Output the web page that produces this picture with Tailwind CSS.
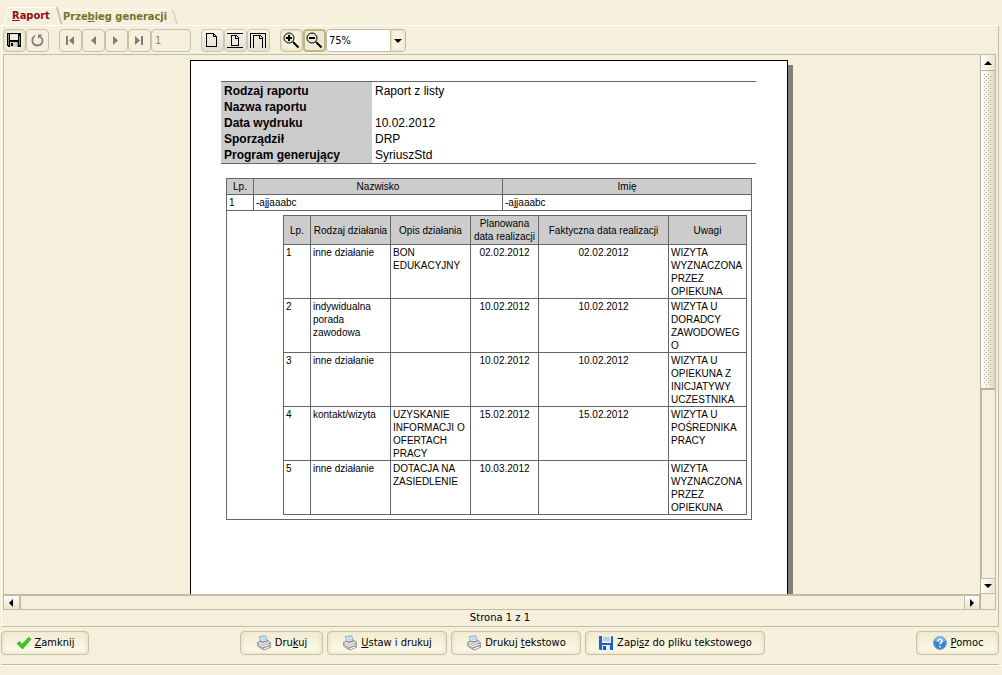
<!DOCTYPE html>
<html lang="pl">
<head>
<meta charset="utf-8">
<title>Raport</title>
<script src="https://cdn.jsdelivr.net/npm/@tailwindcss/browser@4"></script>
</head>
<body class="flex h-screen flex-col overflow-hidden bg-[#f5efdc] font-['DejaVu_Sans_Condensed','DejaVu_Sans',sans-serif] text-[11px] leading-4 text-black">

<!-- shared icons -->
<svg class="hidden">
  <symbol id="printer" viewBox="0 0 16 16">
    <path d="M4.500 7 3.500 1.500 9.500.8 11.500 6z" fill="#dcecf8" stroke="#7d9ab5" stroke-width=".8"/>
    <path d="M5.300 3l4-.5M5.700 4.800l4-.5" stroke="#9dc3e2" stroke-width=".7"/>
    <path d="M1.500 7.500 5 5.800l1 1.400 5-.9.500-1.300 3 2.500v4L7 14.500 1.500 11z" fill="#d9d9da" stroke="#77777b" stroke-width=".8"/>
    <path d="M1.500 7.700 7 10.200l7.500-2.700v4L7 14.500 1.500 11z" fill="#b2b2b6"/>
    <path d="M3 9.500l4 2 7-2.400" stroke="#fafafa" fill="none"/>
    <path d="M6.500 13.200 13 10.800l1.800 1.400-6.500 2.800z" fill="#f4f4f4" stroke="#77777b" stroke-width=".7"/>
    <path d="M12.500 8.600h1.400" stroke="#35b024"/>
  </symbol>
</svg>

<nav class="relative flex h-[25px] shrink-0 items-end pl-3 text-[11px] font-bold">
  <svg class="absolute top-0 left-0" width="182" height="26" viewBox="0 0 182 26" fill="none">
    <path d="M4.500 25C6 19 6 7.500 11 7.500H56" stroke="#fff"/>
    <path d="M56 7.500c3 1 3.500 14 6 17" stroke="#bfbda6" stroke-width="1.500"/>
    <path d="M60 9.500h111" stroke="#fff"/>
    <path d="M171 9.500c4 1 4 12 6.500 15" stroke="#c9c6b0"/>
  </svg>
  <button class="relative h-[18px] w-[51px] text-left whitespace-nowrap text-[#8f0d14]"><u>R</u>aport</button>
  <button class="relative h-4 whitespace-nowrap text-[#75732f]">Prze<u>b</u>ieg generacji</button>
</nav>

<main class="mr-[3px] ml-px flex min-h-0 flex-1 flex-col border border-t-white border-r-[#c0bda6] border-b-[#c0bda6] border-l-white pt-[3px]">
  <div class="flex h-[25px] shrink-0 items-start gap-[10px] pl-px">
    <div class="flex">
      <button aria-label="Zapisz" class="grid size-[23px] place-items-center rounded-[4px] border border-[#c6c2aa] bg-[#f8f3df] shadow-[inset_0_0_4px_#d9d09c]">
        <svg width="15" height="15" viewBox="0 0 15 15" shape-rendering="crispEdges"><path d="M0 0h14v14H1l-1-1z" fill="#000"/><path d="M1 1h1v11H1zM12 3h1v9h-1z" fill="#7f8790"/><path d="M3 1h8v6H3z" fill="#f2eedd"/><path d="M3 9h8v5H3z" fill="#cfd0d4"/><path d="M4 10h2v3H4z" fill="#000"/><path d="M10 9h1v5h-1z" fill="#85878b"/></svg>
      </button>
      <button aria-label="Odśwież" class="grid size-[23px] place-items-center rounded-[4px] border border-[#c6c2aa]">
        <svg width="13" height="13" viewBox="0 0 13 13" fill="none"><path d="M4 1.800C.8 3.500.5 8 3 10.200s6.500 1.500 8-1.200C12.200 6.500 11.200 3.800 9 2.800" stroke="#83827d" stroke-width="1.800"/><path d="M7 .5h4.500L7 5z" fill="#83827d"/></svg>
      </button>
    </div>
    <div class="flex">
      <button aria-label="Pierwsza strona" class="grid size-[23px] place-items-center rounded-[4px] border border-[#c6c2aa]"><svg width="9" height="9" viewBox="0 0 9 9"><path d="M0 0h2v9H0zM8 0v9L3 4.500z" fill="#7e7d79"/></svg></button>
      <button aria-label="Poprzednia strona" class="grid size-[23px] place-items-center rounded-[4px] border border-[#c6c2aa]"><svg width="9" height="9" viewBox="0 0 9 9"><path d="M7 0v9L2 4.500z" fill="#7e7d79"/></svg></button>
      <button aria-label="Następna strona" class="grid size-[23px] place-items-center rounded-[4px] border border-[#c6c2aa]"><svg width="9" height="9" viewBox="0 0 9 9"><path d="M1 0v9l5-4.500z" fill="#7e7d79"/></svg></button>
      <button aria-label="Ostatnia strona" class="grid size-[23px] place-items-center rounded-[4px] border border-[#c6c2aa]"><svg width="9" height="9" viewBox="0 0 9 9"><path d="M6 0h2v9H6zM0 0v9l5-4.500z" fill="#7e7d79"/></svg></button>
      <input aria-label="Numer strony" value="1" class="h-[23px] w-10 rounded-[4px] border border-[#c6c2aa] bg-transparent px-[3px] text-[#8b887a]">
    </div>
    <div class="flex">
      <button aria-label="Rozmiar rzeczywisty" class="grid size-[23px] place-items-center rounded-[4px] border border-[#c9c6b4] bg-gradient-to-b from-[#f8f5e9] to-[#e2dfcd]"><svg width="17" height="17" viewBox="0 0 17 17" fill="none" stroke="#000" shape-rendering="crispEdges"><path d="M2.500 1.500h7l3 3v10h-10zM9.500 1.500v3h3"/></svg></button>
      <button aria-label="Cała strona" class="grid size-[23px] place-items-center rounded-[4px] border border-[#c9c6b4] bg-gradient-to-b from-[#f8f5e9] to-[#e2dfcd]"><svg width="17" height="17" viewBox="0 0 17 17" fill="none" stroke="#000" shape-rendering="crispEdges"><path d="M0 1.500h16M0 15.500h16M4.500 3.500h5l2 2v8h-7zM8.500 3.500v3h3"/></svg></button>
      <button aria-label="Szerokość strony" class="grid size-[23px] place-items-center rounded-[4px] border border-[#c9c6b4] bg-gradient-to-b from-[#f8f5e9] to-[#e2dfcd]"><svg width="17" height="17" viewBox="0 0 17 17" fill="none" stroke="#000" shape-rendering="crispEdges"><path d="M.5 16V1.500h15V16M3.500 16V3.500h7l2 2V16M9.500 3.500v3h3"/></svg></button>
    </div>
    <div class="flex">
      <button aria-label="Powiększ" class="grid size-[23px] place-items-center rounded-[4px] border border-[#c6c2aa] bg-[#f8f3df] shadow-[inset_0_0_4px_#d9d09c]"><svg width="17" height="17" viewBox="0 0 17 17" fill="none" stroke="#000"><circle cx="6" cy="6" r="5" fill="#e6e6dc"/><path d="M6 3v6M3 6h6M10 10l5.500 5.500" stroke-width="2"/></svg></button>
      <button aria-label="Pomniejsz" class="grid size-[23px] place-items-center rounded-[4px] border-2 border-[#bcb789] bg-[#eee9d5]"><svg width="17" height="17" viewBox="0 0 17 17" fill="none" stroke="#000"><circle cx="6" cy="6" r="5" fill="#e6e6dc"/><path d="M3 6h6M10 10l5.500 5.500" stroke-width="2"/></svg></button>
      <div class="relative">
        <select aria-label="Powiększenie" class="h-[23px] w-20 appearance-none rounded-[4px] border border-[#c0bda6] bg-white pl-[2px] text-black"><option>75%</option><option>100%</option></select>
        <span class="pointer-events-none absolute top-px right-px bottom-px grid w-[15px] place-items-center rounded-r-[3px] border-l border-[#c0bda6] bg-[#f8f3df] shadow-[inset_0_0_3px_#d9d09c]"><svg width="8" height="4" viewBox="0 0 8 4"><path d="M0 0h8L4 4z"/></svg></span>
      </div>
    </div>
  </div>

  <section class="mr-[2px] ml-px flex min-h-0 flex-1 border border-[#c0bda6]">
    <div class="flex min-w-0 flex-1 flex-col">
      <div class="flex min-h-0 flex-1 items-start justify-center overflow-hidden pt-[5px] pr-[6px]">
        <article class="min-h-[845px] w-[598px] shrink-0 border border-black bg-white pt-5 pr-[31px] pl-[30px] font-['Liberation_Sans',Arial,sans-serif] text-black shadow-[5px_5px_0_#808080]">
          <table class="w-full border-separate border-spacing-0 border-y border-[#666] text-left text-[12px] leading-4">
            <tbody>
              <tr><th class="w-[151px] bg-[#ccc] px-[3px] pt-px pb-0">Rodzaj raportu</th><td class="px-[3px] pt-px">Raport z listy</td></tr>
              <tr><th class="bg-[#ccc] px-[3px]">Nazwa raportu</th><td></td></tr>
              <tr><th class="bg-[#ccc] px-[3px]">Data wydruku</th><td class="px-[3px]">10.02.2012</td></tr>
              <tr><th class="bg-[#ccc] px-[3px]">Sporządził</th><td class="px-[3px]">DRP</td></tr>
              <tr><th class="bg-[#ccc] px-[3px]">Program generujący</th><td class="px-[3px]">SyriuszStd</td></tr>
            </tbody>
          </table>

          <table class="mt-[14px] ml-[5px] w-[526px] table-fixed border-separate border-spacing-0 border-t border-l border-[#666] text-left text-[10px] leading-[15px] [&_td]:border-[#666] [&_th]:border-[#666] [&_th]:bg-[#ccc] [&_th]:text-center [&_th]:font-normal">
            <colgroup><col class="w-[27px]"><col class="w-[249px]"><col class="w-[249px]"></colgroup>
            <thead><tr><th class="border-r border-b">Lp.</th><th class="border-r border-b">Nazwisko</th><th class="border-r border-b">Imię</th></tr></thead>
            <tbody>
              <tr><td class="border-r border-b px-[2px]">1</td><td class="border-r border-b px-[2px]">-ajjaaabc</td><td class="border-r border-b px-[2px]">-ajjaaabc</td></tr>
              <tr>
                <td colspan="3" class="border-r border-b pt-1 pr-1 pb-1 pl-14">
                  <table class="w-[464px] table-fixed border-separate border-spacing-0 border-t border-l border-[#666] leading-[13px] [&_td]:h-[54px] [&_td]:border-r [&_td]:border-b [&_td]:px-[2px] [&_td]:pt-px [&_td]:align-top [&_th]:h-[29px] [&_th]:border-r [&_th]:border-b [&_th]:whitespace-nowrap">
                    <colgroup><col class="w-[27px]"><col class="w-20"><col class="w-20"><col class="w-[68px]"><col class="w-[130px]"><col class="w-[78px]"></colgroup>
                    <thead><tr><th>Lp.</th><th>Rodzaj działania</th><th>Opis działania</th><th>Planowana<br>data realizacji</th><th>Faktyczna data realizacji</th><th>Uwagi</th></tr></thead>
                    <tbody>
                      <tr><td>1</td><td>inne działanie</td><td>BON EDUKACYJNY</td><td class="text-center">02.02.2012</td><td class="text-center">02.02.2012</td><td>WIZYTA<br>WYZNACZONA PRZEZ<br>OPIEKUNA</td></tr>
                      <tr><td>2</td><td>indywidualna<br>porada<br>zawodowa</td><td></td><td class="text-center">10.02.2012</td><td class="text-center">10.02.2012</td><td>WIZYTA U<br>DORADCY<br>ZAWODOWEG<br>O</td></tr>
                      <tr><td>3</td><td>inne działanie</td><td></td><td class="text-center">10.02.2012</td><td class="text-center">10.02.2012</td><td>WIZYTA U<br>OPIEKUNA Z<br>INICJATYWY<br>UCZESTNIKA</td></tr>
                      <tr><td>4</td><td>kontakt/wizyta</td><td>UZYSKANIE<br>INFORMACJI O<br>OFERTACH<br>PRACY</td><td class="text-center">15.02.2012</td><td class="text-center">15.02.2012</td><td>WIZYTA U<br>POŚREDNIKA<br>PRACY</td></tr>
                      <tr><td>5</td><td>inne działanie</td><td>DOTACJA NA<br>ZASIEDLENIE</td><td class="text-center">10.03.2012</td><td></td><td>WIZYTA<br>WYZNACZONA<br>PRZEZ<br>OPIEKUNA</td></tr>
                    </tbody>
                  </table>
                </td>
              </tr>
            </tbody>
          </table>
        </article>
      </div>
      <div class="flex h-[15px] shrink-0 border-t-2 border-[#c0bda6]">
        <button aria-label="Przewiń w lewo" class="grid w-[17px] place-items-center border-r-2 border-[#c0bda6] bg-gradient-to-b from-white to-[#e9e3cc]"><svg width="5" height="8" viewBox="0 0 5 8"><path d="M4 0v8L0 4z"/></svg></button>
        <div class="flex-1"></div>
        <button aria-label="Przewiń w prawo" class="grid w-4 place-items-center border-x border-[#c0bda6] bg-gradient-to-b from-white to-[#e9e3cc]"><svg width="4" height="8" viewBox="0 0 4 8"><path d="M0 0v8l4-4z"/></svg></button>
      </div>
    </div>
    <div class="flex w-[15px] shrink-0 flex-col border-l border-[#b5b299]">
      <button aria-label="Przewiń w górę" class="grid h-4 shrink-0 place-items-center border-b border-[#b5b299] bg-gradient-to-r from-white to-[#e9e3cc]"><svg width="8" height="4" viewBox="0 0 8 4"><path d="M0 4h8L4 0z"/></svg></button>
      <div class="flex min-h-0 flex-1 flex-col">
        <div class="flex h-[63%] border-b-2 border-[#b5b299] bg-gradient-to-r from-white via-[#f5f1e2] to-[#d9d4bd] px-[3px] py-[3px]">
          <svg class="h-full w-full" shape-rendering="crispEdges"><defs><pattern id="grip" width="4" height="4" patternUnits="userSpaceOnUse"><path d="M0 0h1v1H0zM2 2h1v1H2z" fill="#aaa690"/></pattern></defs><rect width="100%" height="100%" fill="url(#grip)"/></svg>
        </div>
        <div class="flex-1 border-l border-[#c0bda6]"></div>
      </div>
      <button aria-label="Przewiń w dół" class="grid h-4 shrink-0 place-items-center border-y border-[#c0bda6] bg-gradient-to-r from-white to-[#e9e3cc]"><svg width="8" height="4" viewBox="0 0 8 4"><path d="M0 0h8L4 4z"/></svg></button>
      <div class="h-[15px] shrink-0"></div>
    </div>
  </section>
  <p class="h-4 shrink-0 text-center font-['DejaVu_Sans',sans-serif] text-[10px] leading-4">Strona 1 z 1</p>
</main>

<footer class="mr-[3px] ml-px flex shrink-0 justify-between border-b border-[#c0bda6] pt-1 pb-[9px] text-[11px] [&_button]:flex [&_button]:h-6 [&_button]:items-center [&_button]:justify-center [&_button]:gap-[3px] [&_button]:rounded-[4px] [&_button]:border [&_button]:border-[#c6c2aa] [&_button]:bg-gradient-to-b [&_button]:from-[#f2ebcd] [&_button]:to-[#fdfbef] [&_button]:whitespace-nowrap [&_button]:shadow-[inset_0_0_5px_#ded6aa,inset_0_4px_2px_-1px_#fbf7e8]">
  <button class="w-[88px]"><svg width="16" height="16" viewBox="0 0 16 16"><path d="M1 8.500 3.500 6.500 6 9.500 12.500 2.500 15 4 6.500 14z" fill="#35cf20" stroke="#249d17" stroke-width=".7"/></svg><span><u>Z</u>amknij</span></button>
  <div class="flex gap-1">
    <button class="w-[83px]"><svg width="16" height="16"><use href="#printer"/></svg><span>Dru<u>k</u>uj</span></button>
    <button class="w-[120px]"><svg width="16" height="16"><use href="#printer"/></svg><span><u>U</u>staw i drukuj</span></button>
    <button class="w-[130px]"><svg width="16" height="16"><use href="#printer"/></svg><span>Drukuj <u>t</u>ekstowo</span></button>
    <button class="w-[180px]"><svg width="16" height="16" viewBox="0 0 16 16"><path d="M1 1h13l1 1v13H2l-1-1z" fill="#1d62cc"/><path d="M4 1h9v7H4z" fill="#e9eef5"/><path d="M5 3h7M5 5h7" stroke="#9aa7ba"/><path d="M4 10h8v5H4z" fill="#e4eaf3"/><path d="M5 11h3v4H5z" fill="#1d55ba"/></svg><span>Zapi<u>s</u>z do pliku tekstowego</span></button>
  </div>
  <button class="w-[83px]"><svg width="16" height="16" viewBox="0 0 16 16" fill="none"><circle cx="8" cy="8" r="6.500" fill="#3385dc" stroke="#9aa0ab"/><path d="M3 6a5 5 0 0 1 10 0c-2 2-7 2-10 0" fill="#75b5f1"/><path d="M6 6.300c0-2.800 4.300-2.600 4 0C9.800 7.600 8 7.700 8 9.500M8 11v1.500" stroke="#fff" stroke-width="1.500"/></svg><span><u>P</u>omoc</span></button>
</footer>
<div class="h-[10px] shrink-0 border-t border-white"></div>
</body>
</html>
